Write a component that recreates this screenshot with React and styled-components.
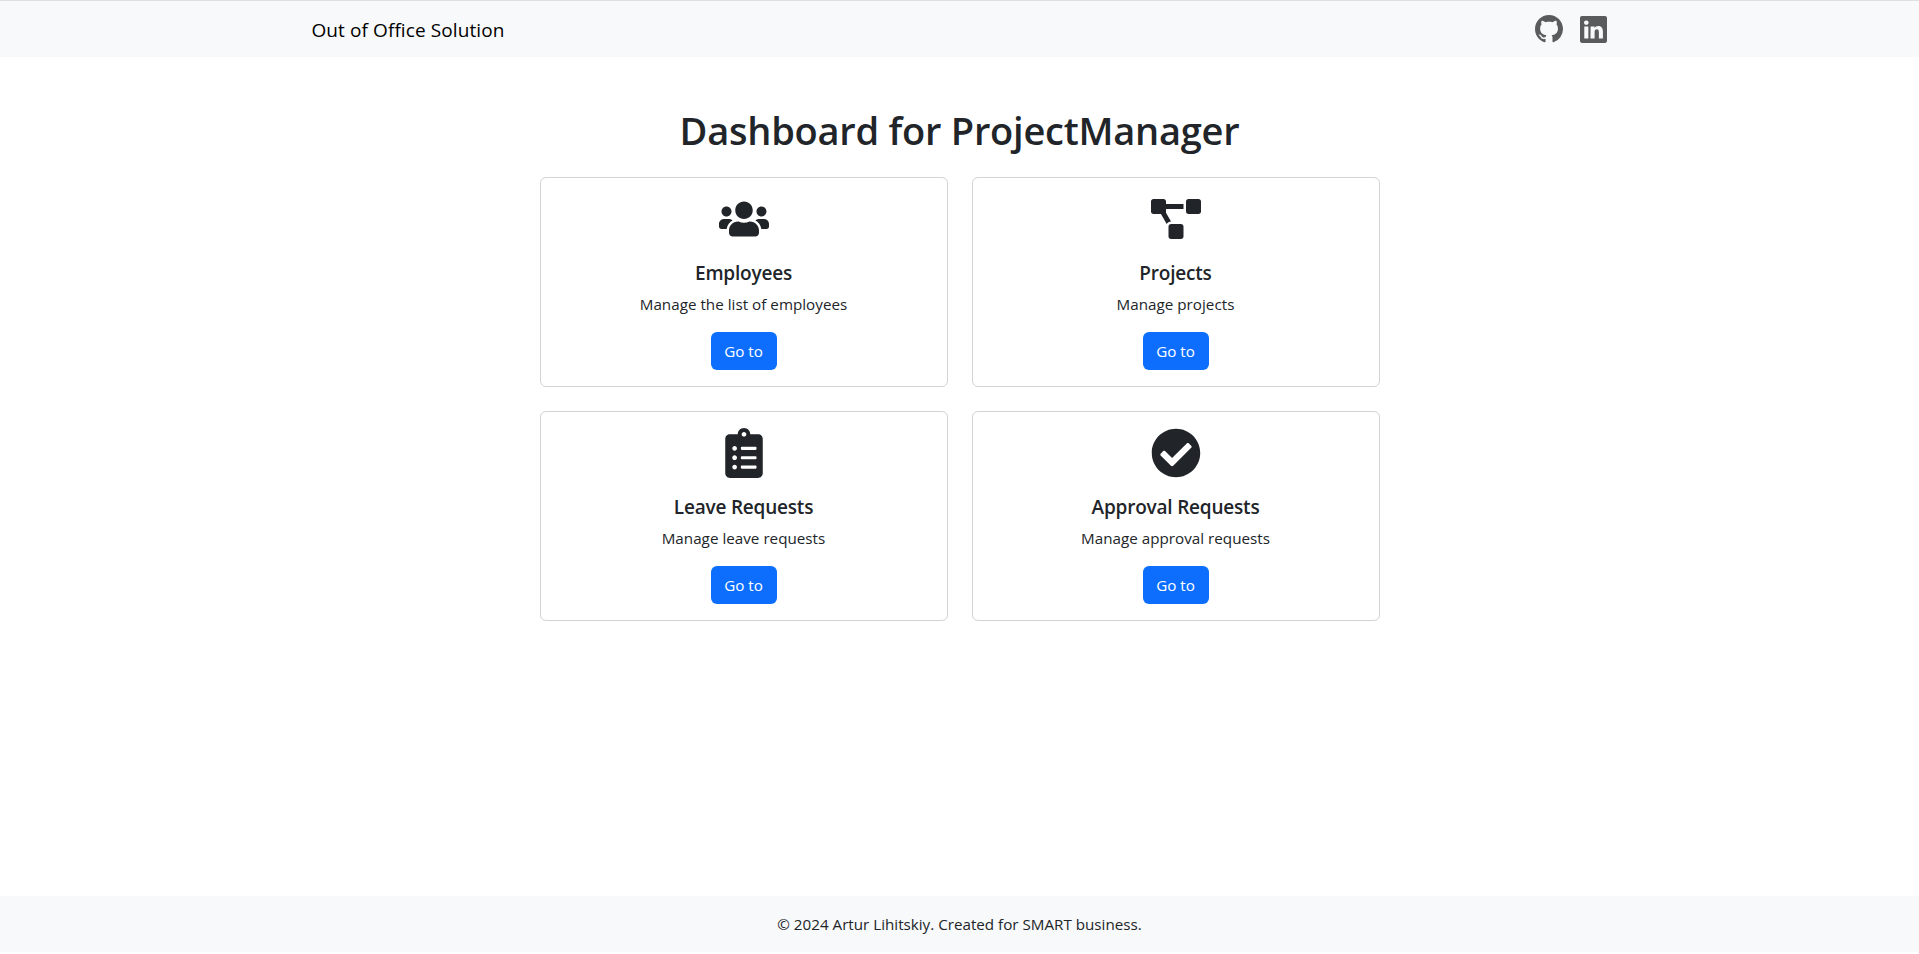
import React from "react";
import styled, { createGlobalStyle } from "styled-components";
import { FaUsers, FaProjectDiagram, FaClipboardList, FaCheckCircle } from "react-icons/fa";
import { BsGithub, BsLinkedin } from "react-icons/bs";

const Global = createGlobalStyle`
  *, *::before, *::after { box-sizing: border-box; }
  body { margin: 0; font: 400 15.2px/24px "Open Sans", "Noto Sans", sans-serif; color: #212529; background: #fff; }
  h1, h5, p { margin: 0; }
`;

const Page = styled.div`
  min-height: 954px;
  display: flex;
  flex-direction: column;
`;

const Header = styled.header`
  flex: none;
  height: 57px;
  background: #f8f9fa;
  border-top: 1px solid #e0e1de;
`;

const HeaderInner = styled.div`
  width: 1296px;
  height: 56px;
  margin: 0 auto;
  display: flex;
  align-items: center;
  justify-content: space-between;
`;

const Brand = styled.a`
  font-size: 19px;
  line-height: 30px;
  padding-top: 2px;
  letter-spacing: 0.09px;
  color: #000;
  white-space: nowrap;
`;

const Social = styled.nav`
  display: flex;
  align-items: center;
  gap: 16.5px;
  padding-right: 1px;
  color: #5a5b5c;
  svg { display: block; }
`;

const Main = styled.main`
  flex: 1;
  width: 840px;
  margin: 0 auto;
  padding-top: 49px;
`;

const Title = styled.h1`
  font-size: 38px;
  line-height: 48px;
  font-weight: 600;
  letter-spacing: -0.24px;
  text-align: center;
  white-space: nowrap;
`;

const Grid = styled.div`
  display: grid;
  grid-template-columns: 408px 408px;
  gap: 24px;
  margin-top: 23px;
`;

const Card = styled.section`
  height: 210px;
  padding: 16px;
  border: 1px solid #d3d3d4;
  border-radius: 6px;
  display: flex;
  flex-direction: column;
  align-items: center;
  svg { display: block; }
`;

const Name = styled.h5`
  margin-top: 17px;
  font-size: 19px;
  line-height: 24px;
  font-weight: 600;
  letter-spacing: -0.2px;
`;

const Text = styled.p`
  margin-top: 7px;
  letter-spacing: 0.02px;
`;

const Button = styled.a`
  width: 66px;
  height: 38px;
  margin-top: 16px;
  border-radius: 6px;
  background: #0d6efd;
  color: #fff;
  line-height: 39px;
  text-align: center;
`;

const Footer = styled.footer`
  flex: none;
  height: 56px;
  margin-bottom: 2px;
  background: #f8f9fa;
  display: flex;
  align-items: center;
  justify-content: center;
`;

const cards = [
  { Icon: FaUsers, name: "Employees", text: "Manage the list of employees" },
  { Icon: FaProjectDiagram, name: "Projects", text: "Manage projects" },
  { Icon: FaClipboardList, name: "Leave Requests", text: "Manage leave requests" },
  { Icon: FaCheckCircle, name: "Approval Requests", text: "Manage approval requests" },
];

export default function App() {
  return (
    <Page>
      <Global />
      <Header>
        <HeaderInner>
          <Brand>Out of Office Solution</Brand>
          <Social>
            <BsGithub size={28} />
            <BsLinkedin size={27} />
          </Social>
        </HeaderInner>
      </Header>
      <Main>
        <Title>Dashboard for ProjectManager</Title>
        <Grid>
          {cards.map(({ Icon, name, text }) => (
            <Card key={name}>
              <Icon size={50} />
              <Name>{name}</Name>
              <Text>{text}</Text>
              <Button>Go to</Button>
            </Card>
          ))}
        </Grid>
      </Main>
      <Footer>© 2024 Artur Lihitskiy. Created for SMART business.</Footer>
    </Page>
  );
}
